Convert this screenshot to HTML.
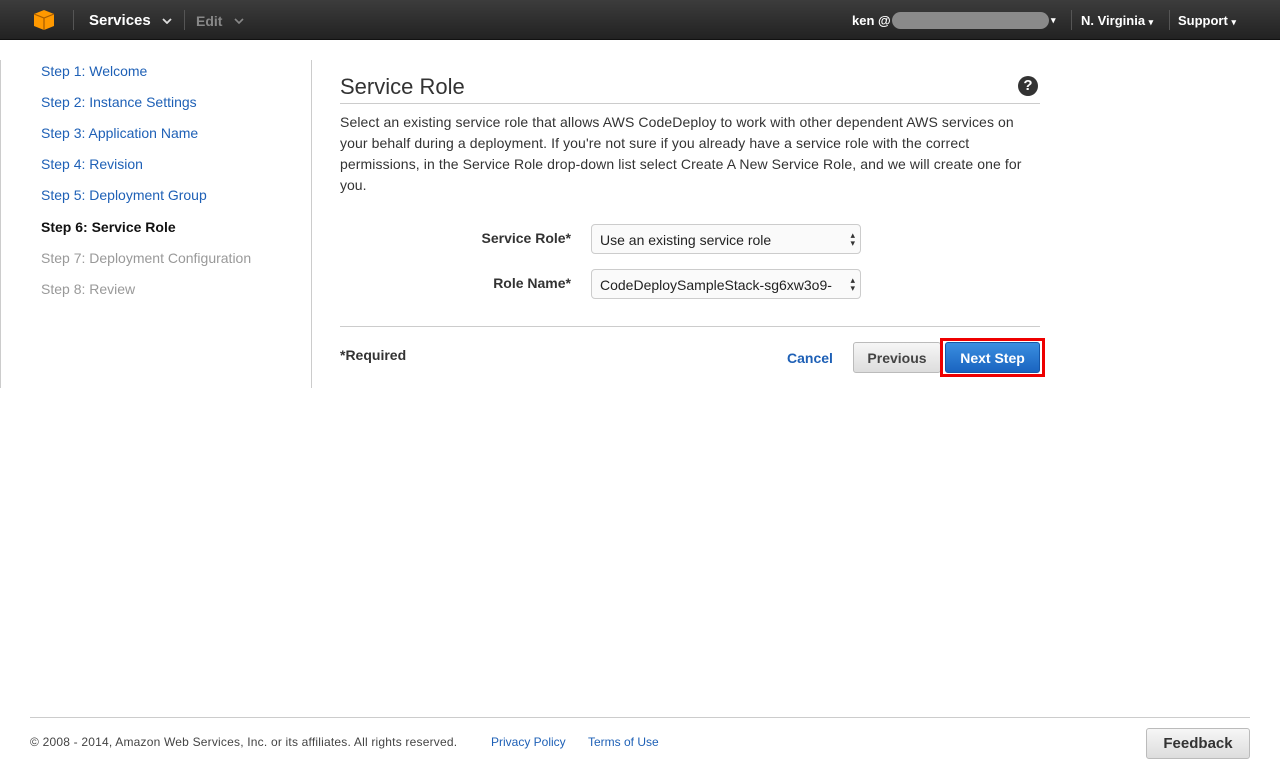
<!DOCTYPE html>
<html><head><style>
*{box-sizing:border-box;margin:0;padding:0}
body{width:1280px;height:768px;background:#fff;font-family:"Liberation Sans",Arial,sans-serif;position:relative;overflow:hidden;color:#333}
.top{position:absolute;left:0;top:0;width:1280px;height:40px;background:linear-gradient(#3c3c3c,#222);border-bottom:1px solid #111}
.t{position:absolute;color:#fff;font-weight:bold;font-size:13px;top:13px}
.sep{position:absolute;top:10px;width:1px;height:20px;background:#555}
.side a{display:block;position:absolute;left:41px;font-size:14px;color:#1e60b6;text-decoration:none}
.btn{position:absolute;border-radius:3px;font-weight:bold;font-size:14px;text-align:center;line-height:30px}
.sel{position:absolute;left:591px;width:270px;height:30px;border:1px solid #ccc;border-radius:4px;font-size:14px;padding:7px 8px;background:#fafafa;color:#222}
.sel:after{content:"▴\A▾";white-space:pre;position:absolute;right:5px;top:6px;font-size:9px;line-height:8px;color:#333}
.lbl{position:absolute;font-weight:bold;font-size:14px;text-align:right;right:709px}
.p div{white-space:nowrap}
</style></head><body>
<div class="top">
<svg style="position:absolute;left:33px;top:9px" width="22" height="22" viewBox="0 0 22 22"><path d="M11 1L21 5V17L11 21L1 17V5Z" fill="#f90"/><path d="M1 5L11 9L21 5M11 9V21" stroke="#a65c00" stroke-width="1.2" fill="none"/></svg>
<div class="sep" style="left:73px"></div>
<div class="t" style="left:89px;font-size:15px;top:12px">Services</div>
<svg style="position:absolute;left:162px;top:18px" width="10" height="6" viewBox="0 0 10 6"><path d="M1 1L5 5L9 1" stroke="#ddd" stroke-width="1.8" fill="none"/></svg>
<div class="sep" style="left:184px"></div>
<div class="t" style="left:196px;color:#888;font-size:14px">Edit</div>
<svg style="position:absolute;left:234px;top:18px" width="10" height="6" viewBox="0 0 10 6"><path d="M1 1L5 5L9 1" stroke="#888" stroke-width="1.6" fill="none"/></svg>
<div class="t" style="left:852px">ken @</div>
<div style="position:absolute;left:892px;top:12px;width:157px;height:17px;border-radius:9px;background:#8a8a8a"></div>
<div class="t" style="left:1051px;font-size:9px;top:15px">▾</div>
<div class="sep" style="left:1071px"></div>
<div class="t" style="left:1081px">N. Virginia <span style="font-size:9px">▾</span></div>
<div class="sep" style="left:1169px"></div>
<div class="t" style="left:1178px">Support <span style="font-size:9px">▾</span></div>
</div>
<div style="position:absolute;left:0;top:60px;width:1px;height:328px;background:#ccc"></div>
<div style="position:absolute;left:311px;top:60px;width:1px;height:328px;background:#ccc"></div>
<div class="side">
<a style="top:63px">Step 1: Welcome</a>
<a style="top:94px">Step 2: Instance Settings</a>
<a style="top:125px">Step 3: Application Name</a>
<a style="top:156px">Step 4: Revision</a>
<a style="top:187px">Step 5: Deployment Group</a>
<a style="top:219px;color:#111;font-weight:bold">Step 6: Service Role</a>
<a style="top:250px;color:#999">Step 7: Deployment Configuration</a>
<a style="top:281px;color:#999">Step 8: Review</a>
</div>
<div style="position:absolute;left:340px;top:74px;font-size:22px;color:#333">Service Role</div>
<div style="position:absolute;left:1018px;top:76px;width:20px;height:20px;border-radius:50%;background:#333;color:#fff;font-weight:bold;font-size:15px;text-align:center;line-height:20px">?</div>
<div style="position:absolute;left:340px;top:103px;width:700px;height:1px;background:#ccc"></div>
<div class="p" style="position:absolute;left:340px;top:112px;width:700px;font-size:14px;line-height:21px;color:#333">
<div style="letter-spacing:.1px">Select an existing service role that allows AWS CodeDeploy to work with other dependent AWS services on</div>
<div style="letter-spacing:.1px">your behalf during a deployment. If you're not sure if you already have a service role with the correct</div>
<div style="letter-spacing:.1px">permissions, in the Service Role drop-down list select Create A New Service Role, and we will create one for</div>
<div>you.</div></div>
<div class="lbl" style="top:230px">Service Role*</div>
<div class="sel" style="top:224px">Use an existing service role</div>
<div class="lbl" style="top:275px">Role Name*</div>
<div class="sel" style="top:269px">CodeDeploySampleStack-sg6xw3o9-</div>
<div style="position:absolute;left:340px;top:326px;width:700px;height:1px;background:#ccc"></div>
<div style="position:absolute;left:340px;top:347px;font-weight:bold;font-size:14px">*Required</div>
<div style="position:absolute;left:787px;top:350px;font-weight:bold;font-size:14px;color:#1e60b6">Cancel</div>
<div class="btn" style="left:853px;top:342px;width:88px;height:31px;border:1px solid #bbb;background:linear-gradient(#f6f6f6,#ddd);color:#444">Previous</div>
<div style="position:absolute;left:940px;top:338px;width:105px;height:39px;border:3px solid #e00"></div>
<div class="btn" style="left:945px;top:342px;width:95px;height:31px;background:linear-gradient(#3a8ee0,#1a64c0);color:#fff;border:1px solid #1556a8">Next Step</div>
<div style="position:absolute;left:30px;top:717px;width:1220px;height:1px;background:#ccc"></div>
<div style="position:absolute;left:30px;top:735px;font-size:12px;letter-spacing:.2px;color:#444;white-space:nowrap">© 2008 - 2014, Amazon Web Services, Inc. or its affiliates. All rights reserved.</div>
<div style="position:absolute;left:491px;top:735px;font-size:12px;color:#1e60b6">Privacy Policy</div>
<div style="position:absolute;left:588px;top:735px;font-size:12px;color:#1e60b6">Terms of Use</div>
<div class="btn" style="left:1146px;top:728px;width:104px;height:31px;border:1px solid #bbb;background:linear-gradient(#f6f6f6,#ddd);color:#333;font-size:15px">Feedback</div>
</body></html>
